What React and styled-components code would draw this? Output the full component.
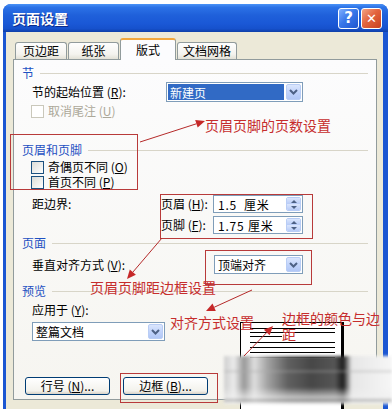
import React from "react";
import styled, { createGlobalStyle } from "styled-components";

const GlobalStyle = createGlobalStyle`
  html, body {
    margin: 0;
    padding: 0;
    background: #ffffff;
  }
  body {
    font-family: "Noto Sans CJK SC", "Noto Sans", sans-serif;
    font-size: 12px;
    color: #000;
  }
`;

function Chevron() {
  return (
    <svg width="9" height="6" viewBox="0 0 9 6">
      <path d="M1 1 L4.5 4.5 L8 1" fill="none" stroke="#4D6185" strokeWidth="2" />
    </svg>
  );
}

function Arrow({ x1, y1, x2, y2 }) {
  // arrow head at (x2, y2)
  const len = Math.hypot(x2 - x1, y2 - y1);
  const ux = (x2 - x1) / len;
  const uy = (y2 - y1) / len;
  const bx = x2 - ux * 9;
  const by = y2 - uy * 9;
  const px = -uy * 4;
  const py = ux * 4;
  return (
    <g>
      <line x1={x1} y1={y1} x2={bx} y2={by} stroke="#B52A2A" strokeWidth="1" />
      <polygon
        points={`${x2},${y2} ${bx + px},${by + py} ${bx - px},${by - py}`}
        fill="#C62828"
      />
    </g>
  );
}

function Combo({ width, height, text, selected }) {
  return (
    <ComboBox $w={width} $h={height}>
      <ComboText $selected={selected}>{text}</ComboText>
      <DropButton>
        <Chevron />
      </DropButton>
    </ComboBox>
  );
}

function Spin({ value }) {
  return (
    <SpinBox>
      <SpinText>{value}</SpinText>
      <SpinButtons>
        <SpinHalf>
          <UpTri />
        </SpinHalf>
        <SpinHalf>
          <DownTri />
        </SpinHalf>
      </SpinButtons>
    </SpinBox>
  );
}

function Check({ label, k, disabled, mt }) {
  return (
    <Row $h={14} $mt={mt} $indent={9}>
      <CheckBox $disabled={disabled} />
      <Label $disabled={disabled}>
        {label} (<Key>{k}</Key>)
      </Label>
    </Row>
  );
}

export default function App() {
  return (
    <Page>
      <GlobalStyle />
      <Window>
        <TitleBar>
          <Title>页面设置</Title>
          <CaptionButton>?</CaptionButton>
          <CaptionButton $close>✕</CaptionButton>
        </TitleBar>
        <Body>
          <TabRow>
            <Tab $w={52}>页边距</Tab>
            <Tab $w={51}>纸张</Tab>
            <Tab $w={56} $active>
              版式
            </Tab>
            <Tab $w={60}>文档网格</Tab>
          </TabRow>
          <Panel>
            <GroupTitle $mt={6}>节</GroupTitle>
            <Row $h={20} $mt={2}>
              <Label $w={134}>
                节的起始位置 (<Key>R</Key>):
              </Label>
              <Combo width={137} height={20} text="新建页" selected />
            </Row>
            <Check label="取消尾注" k="U" disabled mt={2} />

            <GroupTitle $mt={25}>页眉和页脚</GroupTitle>
            <Check label="奇偶页不同" k="O" mt={3} />
            <Check label="首页不同" k="P" mt={1} />
            <Row $h={18} $mt={6}>
              <Label $w={129}>距边界:</Label>
              <Label $w={52}>
                页眉 (<Key>H</Key>):
              </Label>
              <Spin value="1.5  厘米" />
            </Row>
            <Row $h={18} $mt={3}>
              <Label $w={129} />
              <Label $w={52}>
                页脚 (<Key>F</Key>):
              </Label>
              <Spin value="1.75 厘米" />
            </Row>

            <GroupTitle $mt={2}>页面</GroupTitle>
            <Row $h={19} $mt={5}>
              <Label $w={182}>
                垂直对齐方式 (<Key>V</Key>):
              </Label>
              <Combo width={89} height={19} text="顶端对齐" />
            </Row>

            <GroupTitle $mt={10}>预览</GroupTitle>
            <PreviewRow>
              <PreviewLeft>
                <Label>
                  应用于 (<Key>Y</Key>):
                </Label>
                <Combo width={133} height={19} text="整篇文档" />
              </PreviewLeft>
              <PreviewPage>
                <TextLine $mt={5} />
                <TextLine $mt={3} />
                <TextLine $mt={3} $short />
                <TextLine $mt={5} />
                <TextLine $mt={4} />
                <TextLine $mt={4} />
                <TextLine $mt={4} />
              </PreviewPage>
            </PreviewRow>

            <ButtonRow>
              <Button>
                行号 (<Key>N</Key>)...
              </Button>
              <Button>
                边框 (<Key>B</Key>)...
              </Button>
            </ButtonRow>
          </Panel>
        </Body>
      </Window>

      <Smear />

      <RedBox $x={10} $y={134} $w={128} $h={56} />
      <RedBox $x={160} $y={194} $w={153} $h={45} />
      <RedBox $x={205} $y={250} $w={107} $h={35} />
      <RedBox $x={120} $y={373} $w={98} $h={30} />

      <Annotation $x={205} $y={117}>页眉页脚的页数设置</Annotation>
      <Annotation $x={90} $y={279}>页眉页脚距边框设置</Annotation>
      <Annotation $x={170} $y={314}>对齐方式设置</Annotation>
      <Annotation $x={282} $y={310} $w={100}>
        边框的颜色与边距
      </Annotation>

      <ArrowLayer width="392" height="409" viewBox="0 0 392 409">
        <Arrow x1={140} y1={142} x2={205} y2={121} />
        <Arrow x1={162} y1={238} x2={127} y2={279} />
        <Arrow x1={252} y1={290} x2={206} y2={311} />
        <Arrow x1={244} y1={356} x2={273} y2={326} />
      </ArrowLayer>
    </Page>
  );
}

const Page = styled.div`
  position: relative;
  width: 392px;
  height: 409px;
  overflow: hidden;
  box-sizing: border-box;
  padding: 4px 4px 0 3px;
  background: #ffffff;
`;

const Window = styled.div`
  width: 385px;
  height: 405px;
  display: flex;
  flex-direction: column;
  background: #1b56d2;
  border-radius: 8px 8px 0 0;
  overflow: hidden;
`;

const TitleBar = styled.div`
  height: 28px;
  flex-shrink: 0;
  display: flex;
  align-items: center;
  padding: 0 6px 0 9px;
  background: linear-gradient(
    180deg,
    #4a93f7 0%,
    #2c72e6 12%,
    #1f60da 40%,
    #1a58d6 70%,
    #1651cc 88%,
    #0f3fa8 100%
  );
`;

const Title = styled.span`
  flex: 1;
  color: #fff;
  font-weight: bold;
  font-size: 14px;
  text-shadow: 1px 1px 0 #0a2a8a;
`;

const CaptionButton = styled.div`
  width: 21px;
  height: 21px;
  margin-left: 2px;
  box-sizing: border-box;
  border: 1px solid #fff;
  border-radius: 3px;
  display: flex;
  align-items: center;
  justify-content: center;
  color: #fff;
  font-family: "DejaVu Sans", sans-serif;
  font-weight: bold;
  font-size: ${(p) => (p.$close ? "13px" : "15px")};
  background: ${(p) =>
    p.$close
      ? "linear-gradient(135deg, #f3a487 0%, #e3643e 45%, #c8401f 100%)"
      : "linear-gradient(135deg, #7fb0ff 0%, #3a78ea 45%, #1e55cf 100%)"};
`;

const Body = styled.div`
  flex: 1;
  margin: 0 5px 0 3px;
  background: #ece9d8;
  padding: 6px 6px 0 7px;
`;

const TabRow = styled.div`
  display: flex;
  align-items: flex-end;
  height: 21px;
  padding-left: 2px;
`;

const Tab = styled.div`
  position: relative;
  z-index: ${(p) => (p.$active ? 1 : 0)};
  width: ${(p) => p.$w}px;
  height: ${(p) => (p.$active ? 22 : 17)}px;
  margin-right: 1px;
  margin-bottom: ${(p) => (p.$active ? -1 : 0)}px;
  box-sizing: border-box;
  border: 1px solid #919b9c;
  border-bottom: none;
  border-top: ${(p) => (p.$active ? "2px solid #f2a73c" : "1px solid #919b9c")};
  border-radius: 3px 3px 0 0;
  background: ${(p) =>
    p.$active ? "#fcfcfe" : "linear-gradient(180deg, #fefefe 0%, #f4f3ee 70%, #e3e1d6 100%)"};
  display: flex;
  align-items: center;
  justify-content: center;
  font-size: 12px;
  line-height: 14px;
`;

const Panel = styled.div`
  height: 341px;
  box-sizing: border-box;
  border: 1px solid #919b9c;
  background: linear-gradient(180deg, #fcfcfd 0%, #f6f5f0 100%);
  padding: 0 8px;
  display: flex;
  flex-direction: column;
`;

const GroupTitle = styled.div`
  display: flex;
  align-items: center;
  height: 14px;
  line-height: 14px;
  margin-top: ${(p) => p.$mt}px;
  color: #1e50c2;
  &::after {
    content: "";
    flex: 1;
    height: 1px;
    margin-left: 6px;
    background: #d8d5c8;
  }
`;

const Row = styled.div`
  display: flex;
  align-items: center;
  height: ${(p) => p.$h}px;
  margin-top: ${(p) => p.$mt}px;
  padding-left: ${(p) => p.$indent ?? 10}px;
`;

const Label = styled.span`
  flex-shrink: 0;
  width: ${(p) => (p.$w ? `${p.$w}px` : "auto")};
  white-space: nowrap;
  line-height: 14px;
  color: ${(p) => (p.$disabled ? "#aca899" : "#000")};
`;

const Key = styled.u`
  text-decoration: underline;
`;

const CheckBox = styled.span`
  width: 13px;
  height: 13px;
  box-sizing: border-box;
  margin-right: 4px;
  border: 1px solid ${(p) => (p.$disabled ? "#cac8bb" : "#1c5180")};
  background: ${(p) =>
    p.$disabled ? "#fff" : "linear-gradient(135deg, #dcdcd7 0%, #ffffff 100%)"};
`;

const ComboBox = styled.div`
  width: ${(p) => p.$w}px;
  height: ${(p) => p.$h}px;
  box-sizing: border-box;
  border: 1px solid #7f9db9;
  background: #fff;
  padding: 1px;
  display: flex;
  align-items: stretch;
`;

const ComboText = styled.span`
  flex: 1;
  display: flex;
  align-items: center;
  padding-left: 2px;
  margin-right: 2px;
  background: ${(p) => (p.$selected ? "#316ac5" : "transparent")};
  color: ${(p) => (p.$selected ? "#fff" : "#000")};
`;

const DropButton = styled.span`
  width: 15px;
  box-sizing: border-box;
  border: 1px solid #b9cdf5;
  border-radius: 2px;
  background: linear-gradient(180deg, #dbe6fd 0%, #c2d4fb 50%, #b1c7f6 100%);
  display: flex;
  align-items: center;
  justify-content: center;
`;

const SpinBox = styled.div`
  width: 90px;
  height: 18px;
  box-sizing: border-box;
  border: 1px solid #7f9db9;
  background: #fff;
  padding: 1px;
  display: flex;
`;

const SpinText = styled.span`
  flex: 1;
  display: flex;
  align-items: center;
  padding-left: 3px;
  white-space: pre;
  letter-spacing: 0.8px;
`;

const SpinButtons = styled.span`
  width: 15px;
  display: flex;
  flex-direction: column;
  border-radius: 2px;
  overflow: hidden;
  border: 1px solid #b9cdf5;
  box-sizing: border-box;
`;

const SpinHalf = styled.span`
  flex: 1;
  display: flex;
  align-items: center;
  justify-content: center;
  background: linear-gradient(180deg, #dbe6fd 0%, #b7cbf7 100%);
`;

const UpTri = styled.span`
  width: 0;
  height: 0;
  border-left: 3px solid transparent;
  border-right: 3px solid transparent;
  border-bottom: 3px solid #4d6185;
`;

const DownTri = styled.span`
  width: 0;
  height: 0;
  border-left: 3px solid transparent;
  border-right: 3px solid transparent;
  border-top: 3px solid #4d6185;
`;

const PreviewRow = styled.div`
  display: flex;
  height: 74px;
  margin-top: 5px;
`;

const PreviewLeft = styled.div`
  display: flex;
  flex-direction: column;
  gap: 5px;
  padding-left: 10px;
  width: 133px;
`;

const PreviewPage = styled.div`
  width: 104px;
  height: 90px;
  margin: 19px 0 0 75px;
  box-sizing: border-box;
  padding: 0 6px 0 9px;
  background: #fff;
  border-top: 1px solid #000;
  border-left: 1px solid #000;
  border-right: 3px solid #000;
`;

const TextLine = styled.div`
  height: 1px;
  margin-top: ${(p) => p.$mt}px;
  width: ${(p) => (p.$short ? "32px" : "100%")};
  background: #000;
`;

const ButtonRow = styled.div`
  display: flex;
  gap: 13px;
  padding-left: 3px;
`;

const Button = styled.div`
  width: 85px;
  height: 18px;
  box-sizing: border-box;
  border: 1px solid #003c74;
  border-radius: 3px;
  background: linear-gradient(180deg, #ffffff 0%, #f3f2ec 80%, #d8d2c6 100%);
  display: flex;
  align-items: center;
  justify-content: center;
  line-height: 14px;
`;

const Smear = styled.div`
  position: absolute;
  left: 224px;
  top: 356px;
  width: 168px;
  height: 48px;
  filter: blur(1.5px);
  background: linear-gradient(
      180deg,
      rgba(245, 245, 245, 0) 0%,
      rgba(245, 245, 245, 0) 28%,
      rgba(170, 170, 170, 0.45) 32%,
      rgba(245, 245, 245, 0) 36%,
      rgba(245, 245, 245, 0) 65%,
      rgba(240, 240, 240, 0.75) 88%,
      rgba(150, 150, 150, 0.7) 92%,
      rgba(240, 240, 240, 0.85) 97%
    ),
    linear-gradient(
      90deg,
      #cfcfcf 0%,
      #ebebeb 6%,
      #989898 12%,
      #dedede 18%,
      #a2a2a2 26%,
      #606060 38%,
      #474747 52%,
      #555 66%,
      #1c1c1c 71%,
      #e6e6e6 76%,
      #f6f6f6 100%
    );
`;

const RedBox = styled.div`
  position: absolute;
  left: ${(p) => p.$x}px;
  top: ${(p) => p.$y}px;
  width: ${(p) => p.$w}px;
  height: ${(p) => p.$h}px;
  box-sizing: border-box;
  border: 1px solid #b83a3a;
  pointer-events: none;
`;

const Annotation = styled.span`
  position: absolute;
  left: ${(p) => p.$x}px;
  top: ${(p) => p.$y}px;
  width: ${(p) => (p.$w ? `${p.$w}px` : "auto")};
  white-space: ${(p) => (p.$w ? "normal" : "nowrap")};
  color: #c62d2d;
  font-size: 14px;
  line-height: 16px;
`;

const ArrowLayer = styled.svg`
  position: absolute;
  left: 0;
  top: 0;
  pointer-events: none;
`;
